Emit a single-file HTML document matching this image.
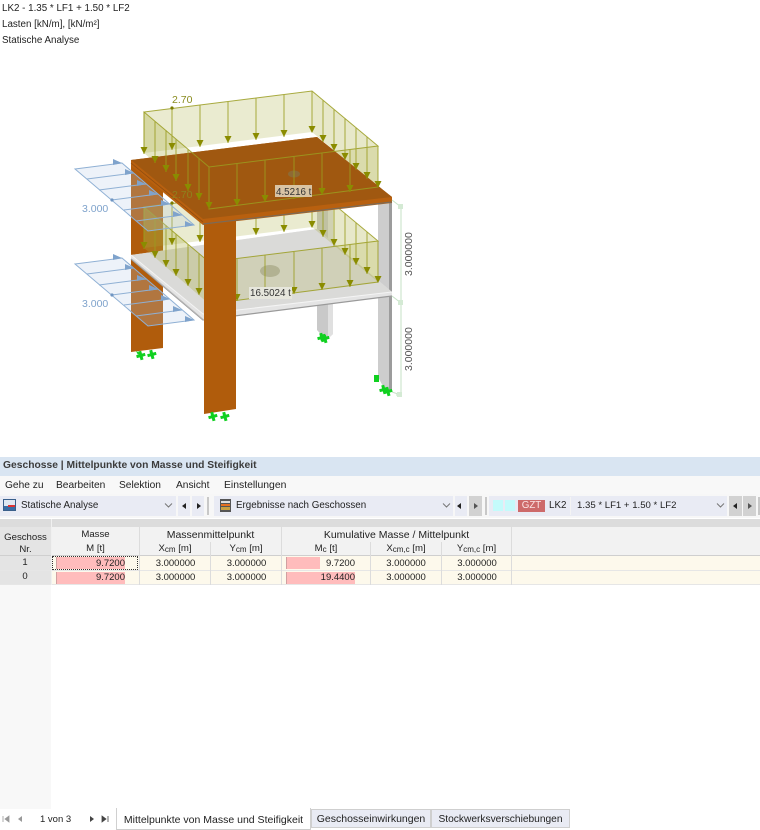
<!DOCTYPE html>
<html><head><meta charset="utf-8"><style>
html,body{margin:0;padding:0;background:#fff}
#p{position:relative;width:760px;height:830px;overflow:hidden;background:#fff;font-family:"Liberation Sans",sans-serif;font-size:10.5px;color:#222}
#p div{position:absolute;box-sizing:border-box;white-space:nowrap}
.t{line-height:14px}
.c{text-align:center}
.r{text-align:right}
.n{font-size:9.5px}
.s{font-size:9.8px}
sub{font-size:8px;vertical-align:baseline;position:relative;top:1px}
.b{background:#e9ebf4}
.v{background:#e4e4e4}
.ln{background:#dcdcdc}
.y{background:#fdf9ec}
.pk{background:#ffbcbc;border-left:1px solid #d0a0a0}
</style></head><body><div id="p">
<div class="t s" style="left:2px;top:2px">LK2 - 1.35 * LF1 + 1.50 * LF2</div>
<div class="t s" style="left:2px;top:18px">Lasten [kN/m], [kN/m²]</div>
<div class="t s" style="left:2px;top:34px">Statische Analyse</div>

<svg style="position:absolute;left:0;top:0" width="760" height="455" viewBox="0 0 760 455">
<defs>
<path id="a" d="M-3.500-7H3.500L0 0Z" fill="#8a8c00"/>
<g id="boxf">
<path d="M144 112L312 91V132L144 153Z" fill="#a9ab3c" fill-opacity=".24"/>
<path d="M312 91L378 146V187L312 132Z" fill="#a9ab3c" fill-opacity=".28"/>
<path d="M144 112L209 167V209L144 153Z" fill="#a9ab3c" fill-opacity=".3"/>
<path d="M209 167L378 146V187L209 209Z" fill="#a9ab3c" fill-opacity=".2"/>
</g>
<g id="boxl">
<path d="M144 112L312 91L378 146L209 167ZM312 91V132M378 146V187L209 209V167M172 108v42M200 105v42M228 101v42M256 98v42M284 95v42M155 121v42M166 130v42M176 139v42M188 149v42M199 158v42M237 164v42M265 160v42M294 157v42M322 153v42M350 150v42M323 100v42M334 109v42M345 118v42M356 128v42M367 137v42" fill="none" stroke="#9a9c20" stroke-width="1" stroke-opacity=".85"/>
<path d="M144 112v42" stroke="#9a9c20" fill="none"/>
<use href="#a" x="144" y="154"/><use href="#a" x="172" y="150"/><use href="#a" x="200" y="147"/><use href="#a" x="228" y="143"/><use href="#a" x="256" y="140"/><use href="#a" x="284" y="137"/><use href="#a" x="312" y="133"/>
<use href="#a" x="155" y="163"/><use href="#a" x="166" y="172"/><use href="#a" x="176" y="181"/><use href="#a" x="188" y="191"/><use href="#a" x="199" y="200"/><use href="#a" x="209" y="209"/>
<use href="#a" x="237" y="206"/><use href="#a" x="265" y="202"/><use href="#a" x="294" y="199"/><use href="#a" x="322" y="195"/><use href="#a" x="350" y="192"/><use href="#a" x="378" y="188"/>
<use href="#a" x="323" y="142"/><use href="#a" x="334" y="151"/><use href="#a" x="345" y="160"/><use href="#a" x="356" y="170"/><use href="#a" x="367" y="179"/>
</g>
<g id="w">
<path d="M75 169L122 163L194 225L148 231Z" fill="#b4c8e6" fill-opacity=".24" stroke="#8fb0d4"/>
<path d="M87 179L134 173M99 190L146 184M112 200L158 194M124 210L170 204M136 221L182 215" stroke="#8fb0d4" fill="none"/>
<path d="M122 163l-9-4v6ZM134 173l-9-4v6ZM146 184l-9-4v6ZM158 194l-9-4v6ZM170 204l-9-4v6ZM182 215l-9-4v6ZM194 225l-9-4v6Z" fill="#7fa3cc"/>
<circle cx="112" cy="200" r="1.6" fill="#6f95c2"/>
</g>
<path id="s" d="M-1.500-5h3v3h3v3h-3v3h-3v-3h-3v-3h3Z" fill="#10d020" transform="rotate(-15)"/>
</defs>

<!-- back column -->
<path d="M317 200H333V334L326 340L317 330Z" fill="#c9c9c9"/>
<path d="M328 200H333V334L328 339Z" fill="#e0e0e0"/>
<!-- right column -->
<path d="M378 200H392V390L386 392L378 377Z" fill="#cdcdcd"/>
<path d="M389 200H392V390H389Z" fill="#9c9c9c"/>
<!-- left column -->
<path d="M131 165H163V348L131 352Z" fill="#b05c0c"/>
<!-- middle slab -->
<path d="M131 255L317 229L392 292V296L203 320L131 259Z" fill="#e4e4e4"/>
<path d="M131 255L317 229L392 292L203 314Z" fill="#dadad8"/>
<path d="M131 259L203 320L392 296" fill="none" stroke="#9a9a9a" stroke-width="1.2"/>
<path d="M133 260L205 321" fill="none" stroke="#bbb" stroke-width="1"/>
<path d="M131 255L203 314L392 292" fill="none" stroke="#f4f4f4" stroke-width="1"/>
<ellipse cx="270" cy="271" rx="10" ry="6" fill="#b4b4a8"/>
<!-- lower load box -->
<use href="#boxf" y="95"/>
<use href="#boxl" y="95"/>
<!-- front column -->
<path d="M204 218H236V409L204 414Z" fill="#b05c0c"/>
<!-- upper box fills behind slab -->
<use href="#boxf"/>
<!-- top slab -->
<path d="M131 160L317 137L392 197V203L203 225L131 166Z" fill="#b8600f"/>
<path d="M131 160L317 137L392 197L203 219Z" fill="#a05810"/>
<path d="M131 163L203 222" stroke="#8c4c10" stroke-width=".8" fill="none"/>
<path d="M203 224L392 202" stroke="#7a6a58" stroke-width="1.2" fill="none"/>
<ellipse cx="294" cy="174" rx="6" ry="3.500" fill="#8e6a34"/>
<!-- upper load box lines -->
<use href="#boxl"/>
<!-- wind -->
<use href="#w"/>
<use href="#w" y="95"/>
<!-- dimensions -->
<path d="M392 200L401 207V393M392 296L401 303M392 392L401 395H396" fill="none" stroke="#c6e2c6"/>
<path d="M398 204h5v5h-5ZM398 300h5v5h-5ZM397 392h5v5h-5Z" fill="#d4ead4"/>
<!-- supports -->
<use href="#s" x="141" y="356"/><use href="#s" x="152" y="355"/><path d="M136 351l4 2-2 2Z" fill="#10d020"/>
<use href="#s" x="213" y="417"/><use href="#s" x="225" y="417"/>
<use href="#s" x="325" y="339"/><use href="#s" x="322" y="338"/>
<path d="M374 375h5v7h-5Z" fill="#10d020"/>
<use href="#s" x="384" y="390"/><use href="#s" x="388" y="392"/>
<!-- dots and labels -->
<circle cx="172" cy="108" r="1.600" fill="#7a7c00"/><circle cx="172" cy="203" r="1.600" fill="#7a7c00"/>
<g font-family="Liberation Sans,sans-serif" font-size="10.5">
<text x="172" y="103" fill="#8a8c20">2.70</text>
<text x="172" y="198" fill="#8a8c20" fill-opacity=".8">2.70</text>
<text x="82" y="212" fill="#7fa3cc">3.000</text>
<text x="82" y="307" fill="#7fa3cc">3.000</text>
<rect x="275" y="185" width="37" height="12" fill="#d9c4a4"/>
<text x="276" y="195" fill="#333" font-size="9.8">4.5216 t</text>
<rect x="249" y="287" width="43" height="12" fill="#e6e6dc"/>
<text x="250" y="296" fill="#333" font-size="9.8">16.5024 t</text>
<text transform="translate(412,276) rotate(-90)" fill="#555">3.000000</text>
<text transform="translate(412,371) rotate(-90)" fill="#555">3.000000</text>
</g>
</svg>

<!-- title -->
<div style="left:0;top:457px;width:760px;height:19px;background:#d9e5f2"></div>
<div class="t" style="left:3px;top:459px;font-weight:bold;font-size:10.3px;color:#3c3c3c">Geschosse | Mittelpunkte von Masse und Steifigkeit</div>
<div style="left:0;top:476px;width:760px;height:18px;background:#f8f8f8"></div>
<div class="t" style="left:5px;top:479px;font-size:10.2px">Gehe zu</div>
<div class="t" style="left:56px;top:479px;font-size:10.2px">Bearbeiten</div>
<div class="t" style="left:119px;top:479px;font-size:10.2px">Selektion</div>
<div class="t" style="left:176px;top:479px;font-size:10.2px">Ansicht</div>
<div class="t" style="left:224px;top:479px;font-size:10.4px">Einstellungen</div>

<!-- toolbar -->
<div style="left:0;top:494px;width:760px;height:24px;background:#f7f7f7"></div>
<div class="b" style="left:0;top:496px;width:176px;height:20px"></div>
<div class="b" style="left:178px;top:496px;width:12px;height:20px"></div>
<div class="b" style="left:192px;top:496px;width:12px;height:20px"></div>
<div style="left:207px;top:497px;width:2px;height:18px;background:#c8c8c8"></div>
<div class="b" style="left:214px;top:496px;width:239px;height:20px"></div>
<div class="b" style="left:455px;top:496px;width:12px;height:20px"></div>
<div style="left:469px;top:496px;width:13px;height:20px;background:#d2d2d2"></div>
<div style="left:485px;top:497px;width:2px;height:18px;background:#c8c8c8"></div>
<div class="b" style="left:489px;top:496px;width:238px;height:20px"></div>
<div style="left:729px;top:496px;width:13px;height:20px;background:#d2d2d2"></div>
<div style="left:743px;top:496px;width:13px;height:20px;background:#d2d2d2"></div>
<div style="left:758px;top:497px;width:2px;height:18px;background:#c8c8c8"></div>
<svg style="position:absolute;left:0;top:494px" width="760" height="24" viewBox="0 494 760 24">
<rect x="3.500" y="499.500" width="12" height="11" fill="#dfe8f2" stroke="#3a5f8a"/><path d="M4 506h11v4H4Z" fill="#3a6ea5"/><path d="M8 505h7v2H8Z" fill="#d33"/>
<path d="M220 499h11v13h-11Z" fill="#555"/><path d="M221 501h9v2h-9Z" fill="#ddd"/><path d="M221 504h9v2h-9Z" fill="#e67020"/><path d="M221 507h9v3h-9Z" fill="#c9a040"/>
<path d="M165 503.500l3.500 3.500 3.500-3.500M443 503.500l3.500 3.500 3.500-3.500M717 503.500l3.500 3.500 3.500-3.500" fill="none" stroke="#777"/>
<path d="M186 503v6l-4-3ZM461 503v6l-4-3ZM737 503v6l-4-3Z" fill="#222"/>
<path d="M197 503v6l4-3Z" fill="#222"/>
<path d="M474 503v6l4-3ZM748 503v6l4-3Z" fill="#555"/>
<rect x="493" y="500" width="10" height="11" fill="#c4fbfb"/><rect x="505" y="500" width="10" height="11" fill="#c4fbfb"/>
<path d="M570.500 497v18" stroke="#f4f4f4"/>
</svg>
<div class="t s" style="left:21px;top:499px">Statische Analyse</div>
<div class="t s" style="left:236px;top:499px">Ergebnisse nach Geschossen</div>
<div class="t c s" style="left:518px;top:500px;width:27px;height:12px;line-height:12px;background:#cd6a6a;color:#fbe4e4">GZT</div>
<div class="t s" style="left:549px;top:499px">LK2</div>
<div class="t s" style="left:577px;top:499px;font-size:9.6px">1.35 * LF1 + 1.50 * LF2</div>

<!-- table -->
<div style="left:0;top:519px;width:760px;height:8px;background:#dcdcdc"></div>
<div style="left:0;top:527px;width:760px;height:29px;background:#f2f2f2"></div>
<div style="left:0;top:527px;width:51px;height:29px;background:#e4e4e4"></div>
<div style="left:0;top:555px;width:760px;height:1px;background:#cfcfcf"></div>
<div class="y" style="left:51px;top:556px;width:709px;height:14px"></div>
<div class="y" style="left:51px;top:571px;width:709px;height:13px"></div>
<div style="left:0;top:570px;width:760px;height:1px;background:#e6e6e6"></div>
<div style="left:0;top:584px;width:760px;height:1px;background:#e6e6e6"></div>
<div class="v" style="left:0;top:556px;width:51px;height:14px"></div>
<div class="v" style="left:0;top:571px;width:51px;height:13px"></div>
<div style="left:0;top:585px;width:51px;height:224px;background:#f8f8f8"></div>
<!-- col lines -->
<div class="ln" style="left:51px;top:519px;width:1px;height:66px;background:#f0f0f0"></div>
<div class="ln" style="left:139px;top:519px;width:1px;height:66px"></div>
<div class="ln" style="left:210px;top:542px;width:1px;height:43px"></div>
<div class="ln" style="left:281px;top:519px;width:1px;height:66px"></div>
<div class="ln" style="left:370px;top:542px;width:1px;height:43px"></div>
<div class="ln" style="left:441px;top:542px;width:1px;height:43px"></div>
<div class="ln" style="left:511px;top:519px;width:1px;height:66px"></div>
<!-- headers -->
<div class="t c" style="left:0;top:531px;width:51px;font-size:9.6px">Geschoss</div>
<div class="t c" style="left:0;top:543px;width:51px;font-size:9.6px">Nr.</div>
<div class="t c" style="left:52px;top:528px;width:87px;font-size:9.6px">Masse</div>
<div class="t c" style="left:52px;top:542px;width:87px;font-size:9.6px">M [t]</div>
<div class="t c" style="left:140px;top:528px;width:141px">Massenmittelpunkt</div>
<div class="t c" style="left:140px;top:542px;width:70px;font-size:9.6px">X<sub>cm</sub> [m]</div>
<div class="t c" style="left:211px;top:542px;width:70px;font-size:9.6px">Y<sub>cm</sub> [m]</div>
<div class="t c" style="left:282px;top:528px;width:229px">Kumulative Masse / Mittelpunkt</div>
<div class="t c" style="left:282px;top:542px;width:88px;font-size:9.6px">M<sub>c</sub> [t]</div>
<div class="t c" style="left:371px;top:542px;width:70px;font-size:9.6px">X<sub>cm,c</sub> [m]</div>
<div class="t c" style="left:442px;top:542px;width:69px;font-size:9.6px">Y<sub>cm,c</sub> [m]</div>
<!-- bars -->
<div class="pk" style="left:56px;top:557px;width:69px;height:12px"></div>
<div class="pk" style="left:56px;top:572px;width:69px;height:12px"></div>
<div class="pk" style="left:286px;top:557px;width:34px;height:12px"></div>
<div class="pk" style="left:286px;top:572px;width:69px;height:12px"></div>
<div style="left:52px;top:556px;width:86px;height:14px;border:1px dotted #333"></div>
<!-- rows -->
<div class="t c n" style="left:0;top:556px;width:50px">1</div>
<div class="t c n" style="left:0;top:570px;width:50px">0</div>
<div class="t r n" style="left:52px;top:557px;width:73px">9.7200</div>
<div class="t r n" style="left:52px;top:571px;width:73px">9.7200</div>
<div class="t c n" style="left:140px;top:557px;width:71px">3.000000</div>
<div class="t c n" style="left:140px;top:571px;width:71px">3.000000</div>
<div class="t c n" style="left:211px;top:557px;width:71px">3.000000</div>
<div class="t c n" style="left:211px;top:571px;width:71px">3.000000</div>
<div class="t r n" style="left:282px;top:557px;width:73px">9.7200</div>
<div class="t r n" style="left:282px;top:571px;width:73px">19.4400</div>
<div class="t c n" style="left:371px;top:557px;width:70px">3.000000</div>
<div class="t c n" style="left:371px;top:571px;width:70px">3.000000</div>
<div class="t c n" style="left:442px;top:557px;width:70px">3.000000</div>
<div class="t c n" style="left:442px;top:571px;width:70px">3.000000</div>

<!-- tabs -->
<svg style="position:absolute;left:0;top:805px" width="116" height="25" viewBox="0 805 116 25">
<path d="M3 816v6M9 816v6l-4-3Z" fill="#999" stroke="#999" stroke-width=".8"/>
<path d="M22 816v6l-4-3Z" fill="#999"/>
<path d="M90 816v6l4-3Z" fill="#444"/>
<path d="M108 816v6M102 816v6l4-3Z" fill="#444" stroke="#444" stroke-width=".8"/>
</svg>
<div class="t n" style="left:40px;top:813px">1 von 3</div>
<div class="t c" style="left:116px;top:808px;width:195px;height:22px;line-height:24px;background:#fff;border:1px solid #d0d0d0;border-top:0;border-bottom:1px solid #ccc">Mittelpunkte von Masse und Steifigkeit</div>
<div class="t c" style="left:311px;top:809px;width:120px;height:19px;line-height:19px;background:#e9ebf4;border:1px solid #cfcfcf">Geschosseinwirkungen</div>
<div class="t c" style="left:431px;top:809px;width:139px;height:19px;line-height:19px;background:#e9ebf4;border:1px solid #cfcfcf;font-size:10.2px">Stockwerksverschiebungen</div>
</div></body></html>
